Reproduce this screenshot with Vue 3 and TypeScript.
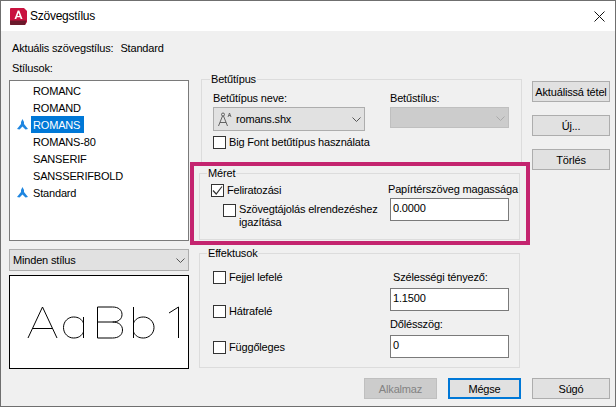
<script setup lang="ts">
interface Style { name: string; mark: boolean; selected: boolean }
const styles: Style[] = [
  { name: 'ROMANC', mark: false, selected: false },
  { name: 'ROMAND', mark: false, selected: false },
  { name: 'ROMANS', mark: true, selected: true },
  { name: 'ROMANS-80', mark: false, selected: false },
  { name: 'SANSERIF', mark: false, selected: false },
  { name: 'SANSSERIFBOLD', mark: false, selected: false },
  { name: 'Standard', mark: true, selected: false },
]
</script>

<template>
  <div class="win">
    <header class="title">
      <svg class="logo" width="17" height="17" viewBox="0 0 17 17">
        <path d="M1 0h13l3 3v11l-2 3H1q-1 0-1-1V1q0-1 1-1z" fill="#c9123f" />
        <path d="M0 12.500h16.500L15 17H1q-1 0-1-1z" fill="#6b1a2c" />
        <path d="M4.500 11 7.700 2.500h1.600L12.500 11h-1.800l-.6-1.700H6.900L6.300 11zM7.400 8h2.200L8.500 4.700z" fill="#fff" />
      </svg>
      <span class="title-text">Szövegstílus</span>
      <svg class="close" width="11" height="11" viewBox="0 0 11 11">
        <path d="M.5.500l10 10M10.500.500l-10 10" stroke="#111" stroke-width="1" fill="none" />
      </svg>
    </header>

    <main class="body">
      <p class="current"><span>Aktuális szövegstílus:</span><span>Standard</span></p>

      <div class="cols">
        <section class="left">
          <p class="styles-label">Stílusok:</p>
          <ul class="list">
            <li v-for="s in styles" :key="s.name" class="item">
              <svg v-if="s.mark" class="mark" width="11" height="11" viewBox="0 0 11 11">
                <path d="M5.500 0 7 3v2l4 5-2.500.5-3-3-3 3L0 10l4-5V3z" fill="#1f86e0" />
              </svg>
              <span class="item-name" :class="{ selected: s.selected }">{{ s.name }}</span>
            </li>
          </ul>
          <div class="combo filter">
            <span>Minden stílus</span>
            <svg class="chev" width="9" height="5" viewBox="0 0 9 5"><path d="M.5.500l4 4 4-4" fill="none" stroke="#555" /></svg>
          </div>
          <div class="preview">
            <svg width="178" height="92" viewBox="0 0 178 92">
              <g fill="none" stroke="#000" stroke-width="1" transform="translate(-10 -276)">
                <path d="M28 338 42.500 307 57 338M33 328.500H52" />
                <path d="M83.500 317v21M83.500 323c-2-4-5-6-10-6s-10 4-10 10.500 5 10.500 10 10.500 8-2 10-6" />
                <path d="M97.500 307v31M97.500 307h15c6 0 9.500 3 9.500 7.500s-3.500 7.500-9.500 7.500h-15M112.500 322c6 0 10 3 10 8s-4 8-10 8h-15" />
                <path d="M133.500 307v31M133.500 323c2-4 5-6 10-6s10.500 4 10.500 10.500-5.500 10.500-10.500 10.500-8-2-10-6" />
                <path d="M169 313 178.500 307v31" />
              </g>
            </svg>
          </div>
        </section>

        <section class="mid">
          <fieldset class="group font">
            <legend>Betűtípus</legend>
            <div class="font-row">
              <div class="font-name">
                <label>Betűtípus neve:</label>
                <div class="combo font-combo">
                  <svg class="shx" width="17" height="17" viewBox="0 0 17 17">
                    <g fill="none" stroke="#555" stroke-width=".9">
                      <circle cx="6" cy="3.500" r="1.500" />
                      <path d="M5.500 5 1.500 15M6.500 5l4 10M3 11.500h6" />
                    </g>
                    <path d="M11 6l1.500-4L14 6M11.700 4.500h1.600" fill="none" stroke="#555" stroke-width=".8" />
                  </svg>
                  <span>romans.shx</span>
                  <svg class="chev" width="9" height="5" viewBox="0 0 9 5"><path d="M.5.500l4 4 4-4" fill="none" stroke="#555" /></svg>
                </div>
              </div>
              <div class="font-style">
                <label>Betűstílus:</label>
                <div class="combo disabled">
                  <svg class="chev" width="9" height="5" viewBox="0 0 9 5"><path d="M.5.500l4 4 4-4" fill="none" stroke="#aaa" /></svg>
                </div>
              </div>
            </div>
            <label class="check big"><i class="box"></i>Big Font betűtípus használata</label>
          </fieldset>

          <fieldset class="group size">
            <legend>Méret</legend>
            <div class="size-left">
              <label class="check">
                <i class="box">
                  <svg width="11" height="11" viewBox="0 0 11 11"><path d="M1 5.500 4.200 9 10 1.500" fill="none" stroke="#333" stroke-width="1.200" /></svg>
                </i>Feliratozási
              </label>
              <label class="check nested"><i class="box"></i><span>Szövegtájolás elrendezéshez<br />igazítása</span></label>
            </div>
            <div class="size-right">
              <label>Papírtérszöveg magassága</label>
              <div class="input">0.0000</div>
            </div>
          </fieldset>

          <fieldset class="group effects">
            <legend>Effektusok</legend>
            <div class="fx-left">
              <label class="check"><i class="box"></i>Fejjel lefelé</label>
              <label class="check"><i class="box"></i>Hátrafelé</label>
              <label class="check last"><i class="box"></i>Függőleges</label>
            </div>
            <div class="fx-right">
              <label class="width-label">Szélességi tényező:</label>
              <div class="input">1.1500</div>
              <label class="slant-label">Dőlésszög:</label>
              <div class="input">0</div>
            </div>
          </fieldset>
        </section>

        <aside class="right">
          <button class="btn">Aktuálissá tétel</button>
          <button class="btn">Új...</button>
          <button class="btn">Törlés</button>
        </aside>
      </div>

      <footer class="foot">
        <button class="btn off">Alkalmaz</button>
        <button class="btn primary">Mégse</button>
        <button class="btn">Súgó</button>
      </footer>
    </main>

    <div class="highlight"></div>
  </div>
</template>

<style>
html, body { margin: 0; background: #f0f0f0; }
</style>

<style scoped>
* { box-sizing: border-box; }
.win {
  position: relative; width: 616px; height: 407px; overflow: hidden;
  border: 1px solid #6f6f6f; background: #f0f0f0;
  font: 11px "Liberation Sans", Arial, sans-serif; letter-spacing: -0.17px; color: #000;
  display: flex; flex-direction: column;
}
p { margin: 0; }
.title { height: 30px; background: #fff; display: flex; align-items: center; padding: 0 10px 0 9px; flex: none; }
.logo { flex: none; }
.title-text { margin-left: 3px; font-size: 12px; letter-spacing: -0.25px; }
.close { margin-left: auto; }
.body { flex: 1; display: flex; flex-direction: column; padding: 0 5px 0 8px; }
.current { display: flex; gap: 7px; padding: 10px 0 0 3px; height: 26px; line-height: 15px; }
.cols { display: flex; height: 318px; }
.left { width: 180px; flex: none; }
.styles-label { padding: 4px 0 0 3px; height: 23px; line-height: 15px; }
.list { list-style: none; margin: 0; padding: 1px 0 0; width: 180px; height: 161px; background: #fff; border: 1px solid #7a7a7a; }
.item { height: 17px; display: flex; align-items: center; padding-left: 21px; position: relative; }
.mark { position: absolute; left: 7px; top: 3px; }
.item-name { padding: 0 2px; height: 17px; line-height: 19px; }
.item-name.selected { background: #0078d7; color: #fff; padding-right: 4px; }
.combo { display: flex; align-items: center; background: #e1e1e1; border: 1px solid #adadad; position: relative; }
.chev { position: absolute; right: 3px; top: 50%; margin-top: -2px; }
.filter { width: 180px; height: 22px; margin-top: 8px; padding-left: 3px; }
.preview { width: 180px; height: 94px; margin-top: 4px; background: #fff; border: 1px solid #000; }
.preview svg { display: block; }
.mid { width: 343px; flex: none; padding-left: 10px; }
.group { margin: 0; padding: 0; border: 1px solid #dcdcdc; position: relative; width: 321px; min-width: 0; }
.group legend { margin-left: 7px; padding: 0 1px; line-height: 15px; font-size: 11px; }
.font { margin: 15px 0 0 2px; height: 93px; }
.font legend { margin-left: 8px; }
.font-row { display: flex; gap: 25px; padding-left: 11px; }
.font-name label, .font-style label { display: block; line-height: 15px; height: 15px; margin-top: 4px; }
.font-name { width: 152px; }
.font-combo { height: 24px; margin-top: 1px; padding-left: 3px; gap: 2px; }
.font-style { width: 119px; }
.disabled { height: 21px; margin-top: 1px; background: #ccc; border-color: #bfbfbf; }
.check { display: flex; align-items: flex-start; gap: 3px; line-height: 15px; white-space: nowrap; }
.box { width: 13px; height: 13px; flex: none; display: block; background: #fff; border: 1px solid #333; margin-top: 1px; }
.box svg { display: block; }
.big { margin: 4px 0 0 11px; }
.size { margin-top: 1px; height: 74px; display: flex; }
.size-left { width: 190px; padding: 2px 0 0 11px; }
.nested { margin: 5px 0 0 12px; line-height: 13px; }
.size-right { padding-top: 1px; }
.size-right label { display: block; line-height: 15px; height: 15px; margin-left: -2px; white-space: nowrap; }
.input { width: 119px; height: 23px; background: #fff; border: 1px solid #7a7a7a; padding: 2px; line-height: 15px; }
.size-right .input { margin-top: 1px; }
.effects { margin-top: 6px; height: 122px; display: flex; }
.fx-left { width: 190px; padding: 9px 0 0 13px; display: flex; flex-direction: column; gap: 19px; }
.last { margin-top: 2px; }
.fx-right { display: flex; flex-direction: column; }
.width-label { margin: 9px 0 0 3px; line-height: 15px; height: 15px; }
.slant-label { line-height: 15px; height: 15px; margin-top: 6px; }
.fx-right .input { margin-top: 3px; }
.right { width: 78px; flex: none; display: flex; flex-direction: column; gap: 13px; padding-top: 24px; }
.btn {
  width: 78px; height: 21px; flex: none; padding: 0; font: inherit; letter-spacing: inherit; color: #000;
  background: #e1e1e1; border: 1px solid #adadad; white-space: nowrap;
}
.foot { display: flex; justify-content: flex-end; gap: 11px; padding-top: 3px; }
.foot .btn { width: 73px; }
.foot .btn:last-child { width: 78px; }
.off { background: #ccc; border-color: #bfbfbf; color: #838383; }
.primary { border: 2px solid #0078d7; }
.highlight { position: absolute; left: 189px; top: 161px; width: 340px; height: 83px; border: 4px solid #c4246f; pointer-events: none; }
</style>
